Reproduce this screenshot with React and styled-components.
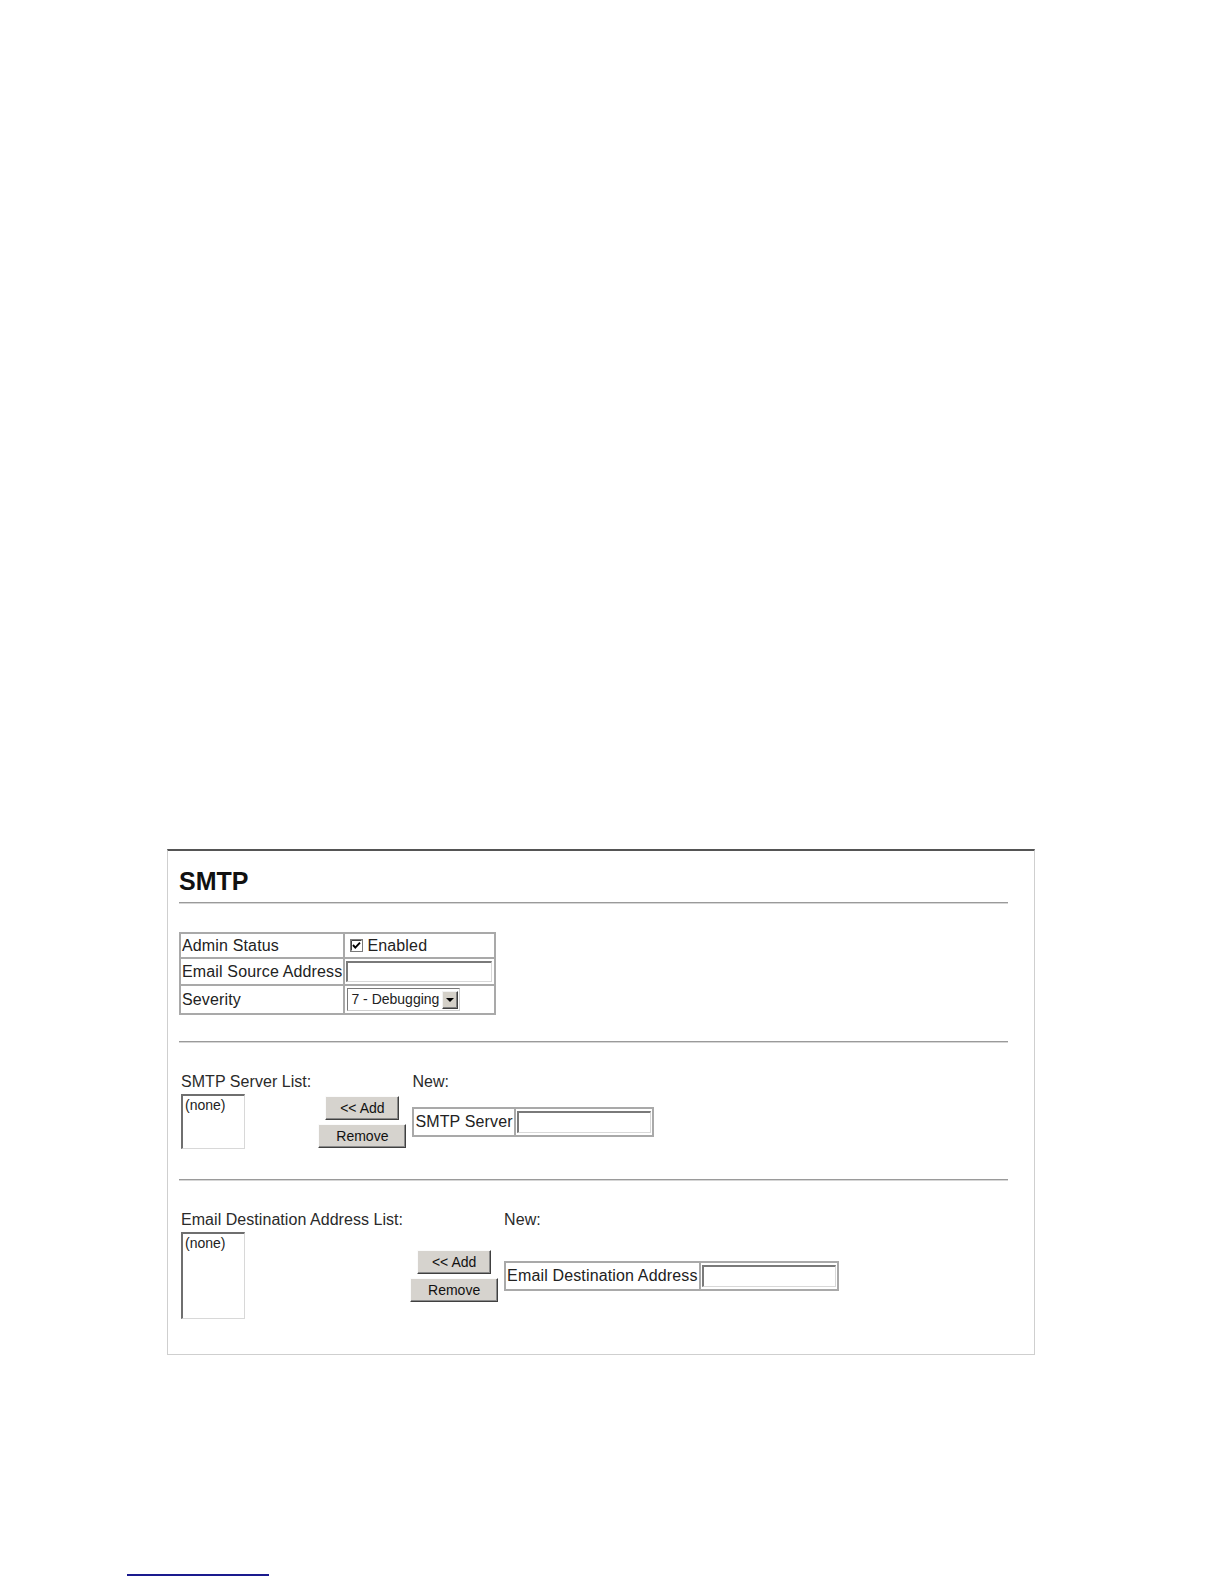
import styled, { createGlobalStyle } from "styled-components";

const GlobalStyle = createGlobalStyle`
  html, body {
    margin: 0;
    padding: 0;
    background: #fff;
  }
  body {
    font-family: "Liberation Sans", Arial, sans-serif;
    color: #222;
  }
`;

const Page = styled.div`
  width: 1224px;
  min-height: 1584px;
  padding-top: 849px;
  box-sizing: border-box;
`;

const Panel = styled.section`
  width: 868px;
  box-sizing: border-box;
  margin-left: 167px;
  border-top: 2px solid #555;
  border-left: 1px solid #cfcfcf;
  border-right: 1px solid #cfcfcf;
  border-bottom: 1px solid #cfcfcf;
  padding: 0 26px 35px 11px;
`;

const Title = styled.h2`
  margin: 16px 0 7px;
  font-size: 25px;
  line-height: 28px;
  font-weight: bold;
  color: #111;
`;

const Rule = styled.div`
  height: 0;
  border-top: 1px solid #9a9a9a;
  border-bottom: 1px solid #d6d6d6;
  margin-bottom: ${(p) => p.$after}px;
`;

const FormTable = styled.table`
  border-collapse: separate;
  border-spacing: 0;
  border: 1px solid #a9a9a9;
  font-size: 16px;
  line-height: 19px;
  letter-spacing: 0.15px;
  margin-bottom: ${(p) => p.$after || 0}px;

  td {
    border: 1px solid #a9a9a9;
    padding: 2px 1px;
    vertical-align: middle;
    white-space: nowrap;
  }
`;

const CheckLabel = styled.label`
  display: flex;
  align-items: center;
  gap: 4px;
  height: 19px;
  padding-left: 4px;
`;

const TextInput = styled.input`
  display: block;
  box-sizing: border-box;
  width: ${(p) => p.$w}px;
  height: ${(p) => p.$h}px;
  margin: 0;
  padding: 0 2px;
  border-style: solid;
  border-width: 2px 1px 1px 2px;
  border-color: #7a7a7a #d8d8d8 #d8d8d8 #7a7a7a;
  background: #fff;
  font: inherit;
  outline: none;
`;

const SelectBox = styled.div`
  display: flex;
  align-items: center;
  justify-content: space-between;
  box-sizing: border-box;
  width: 113px;
  height: 23px;
  margin-left: 1px;
  border: 1px solid #7a7a7a;
  border-right-color: #cfcfcf;
  border-bottom-color: #cfcfcf;
  background: #fff;
  font-size: 14px;
  letter-spacing: 0;
  color: #222;
  padding-left: 3px;
`;

const SelectArrow = styled.span`
  display: flex;
  align-items: center;
  justify-content: center;
  box-sizing: border-box;
  width: 16px;
  height: 18px;
  margin-right: 1px;
  background: #d4d0c8;
  border: 1px solid;
  border-color: #f2f2f2 #404040 #404040 #f2f2f2;
  box-shadow: inset -1px -1px #808080;

  &::after {
    content: "";
    border-left: 4px solid transparent;
    border-right: 4px solid transparent;
    border-top: 4px solid #000;
    margin-top: 1px;
  }
`;

const ListGrid = styled.div`
  display: grid;
  grid-template-columns: max-content max-content max-content;
  column-gap: 6px;
  row-gap: 3px;
  align-items: center;
  padding-left: 2px;
  font-size: 16px;
  line-height: 18px;
  letter-spacing: 0.05px;
  margin-bottom: ${(p) => p.$after || 0}px;
`;

const FieldLabel = styled.div`
  white-space: nowrap;
  padding-right: 1px;
  color: #2a2a2a;
`;

const ListBox = styled.div`
  box-sizing: border-box;
  width: 64px;
  height: ${(p) => p.$h}px;
  border-style: solid;
  border-width: 2px 1px 1px 2px;
  border-color: #6f6f6f #d8d8d8 #d8d8d8 #6f6f6f;
  background: #fff;
  padding: 1px 2px;
  font-size: 14px;
  line-height: 16px;
  letter-spacing: 0;
  color: #222;
`;

const ButtonStack = styled.div`
  display: flex;
  flex-direction: column;
  align-items: center;
  gap: 4px;
`;

const Button = styled.button`
  box-sizing: border-box;
  width: ${(p) => p.$w}px;
  height: 24px;
  margin: 0;
  padding: 0;
  background: #d6d3ce;
  border: 1px solid;
  border-color: #fbfbfb #404040 #404040 #fbfbfb;
  box-shadow: inset -1px -1px #8a8a8a;
  font-family: "Liberation Sans", Arial, sans-serif;
  font-size: 14px;
  letter-spacing: 0;
  color: #111;
`;

const FooterRule = styled.div`
  width: 142px;
  margin: 219px 0 0 127px;
  border-top: 2px solid #1a1a8e;
`;

const CheckIcon = () => (
  <svg width="13" height="13" viewBox="0 0 13 13">
    <rect x="0.5" y="0.5" width="12" height="12" fill="#fff" stroke="#7a7a7a" />
    <path d="M1.5 1.5 H11.5" stroke="#404040" />
    <path d="M1.5 1.5 V11.5" stroke="#404040" />
    <path d="M3 6 L5.3 8.6 L10 3.6" fill="none" stroke="#000" strokeWidth="1.9" />
  </svg>
);

const AddressList = ({ label, field, boxHeight, after }) => (
  <ListGrid $after={after}>
    <FieldLabel>{label}</FieldLabel>
    <div />
    <FieldLabel>New:</FieldLabel>
    <ListBox $h={boxHeight}>(none)</ListBox>
    <ButtonStack>
      <Button $w={74}>&lt;&lt; Add</Button>
      <Button $w={88}>Remove</Button>
    </ButtonStack>
    <FormTable>
      <tbody>
        <tr>
          <td>{field}</td>
          <td>
            <TextInput $w={134} $h={22} />
          </td>
        </tr>
      </tbody>
    </FormTable>
  </ListGrid>
);

const App = () => {
  return (
    <Page>
      <GlobalStyle />
      <Panel>
        <Title>SMTP</Title>
        <Rule $after={28} />
        <FormTable $after={26}>
          <tbody>
            <tr>
              <td>Admin Status</td>
              <td style={{ width: 147 }}>
                <CheckLabel>
                  <CheckIcon />
                  Enabled
                </CheckLabel>
              </td>
            </tr>
            <tr>
              <td>Email Source Address</td>
              <td>
                <TextInput $w={146} $h={21} />
              </td>
            </tr>
            <tr>
              <td>Severity</td>
              <td>
                <SelectBox>
                  7 - Debugging
                  <SelectArrow />
                </SelectBox>
              </td>
            </tr>
          </tbody>
        </FormTable>
        <Rule $after={30} />
        <AddressList
          label="SMTP Server List:"
          field="SMTP Server"
          boxHeight={55}
          after={30}
        />
        <Rule $after={30} />
        <AddressList
          label="Email Destination Address List:"
          field="Email Destination Address"
          boxHeight={87}
        />
      </Panel>
      <FooterRule />
    </Page>
  );
};

export default App;
